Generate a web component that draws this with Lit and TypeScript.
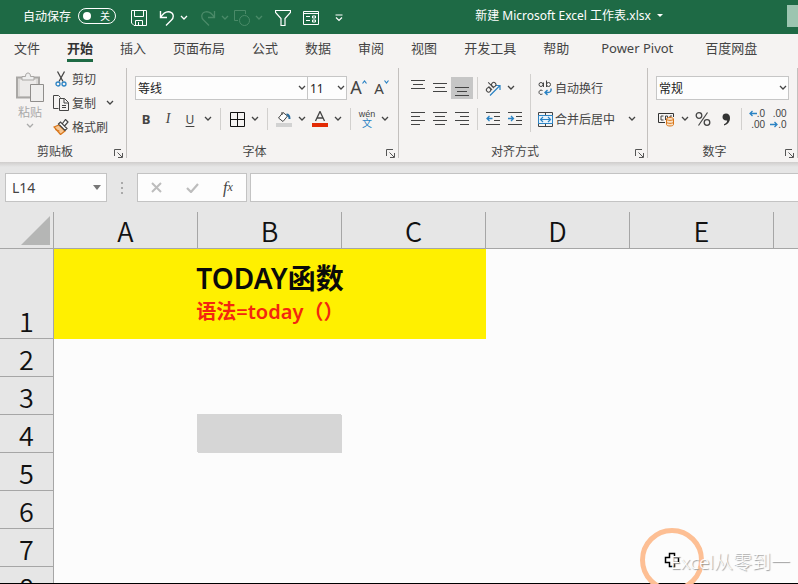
import { LitElement, html, css, svg, TemplateResult } from "lit";
import { customElement, property } from "lit/decorators.js";
import { classMap } from "lit/directives/class-map.js";

const icon = (w: number, h: number, body: TemplateResult) =>
  html`<svg width=${w} height=${h} viewBox="0 0 ${w} ${h}" fill="none" stroke="currentColor" aria-hidden="true">${body}</svg>`;

const chevron = icon(8, 6, svg`<path d="M1 1l3 3 3-3" stroke-width="1.3"/>`);

const icons = {
  save: icon(16, 16, svg`<path d="M.5.5h15v15H3L.5 13zM3.5.5v6h9v-6M4.5 15.5v-5h7v5M7.5 12v3.5"/>`),
  undo: icon(16, 16, svg`<path d="M1.5 1v6.500H8M1.500 7.500C4 3.500 7.500 1 11 2c4 1.200 4 5.500 1.500 8L7 15.500" stroke-width="1.4"/>`),
  redo: icon(16, 16, svg`<path d="M14.500 1v6.500H8M14.500 7.500C12 3.500 8.500 1 5 2c-4 1.200-4 5.500-1.500 8L9 15.500" stroke-width="1.3"/>`),
  shapes: icon(16, 16, svg`<path d="M4 10.500H.5V.5h11v3.500"/><circle cx="10.500" cy="10.500" r="5"/>`),
  funnel: icon(16, 16, svg`<path d="M.5.5h15v2L10 8.500v7H6v-7L.5 2.500z" stroke-width="1.2"/>`),
  form: icon(16, 14, svg`<path d="M.5.500h15v13H.5zM.5 2.500h15M3 5.500h4M3 9.500h4"/><path d="M9.500 5h3v2h-3zM9.500 9h3v2h-3z"/>`),
  customize: icon(8, 8, svg`<path d="M.5 1h7M1 3.500l3 3 3-3" stroke-width="1.2"/>`),
  paste: icon(30, 31, svg`<path d="M2 5.500h22v20H2z" fill="#dcdad8" stroke="#a9a7a5" stroke-width="2"/><path d="M5 8h16v16H5z" fill="#eceae9" stroke="none"/><path d="M7 8V4.500h3.500C10.500 2 11.500 1 13 1s2.500 1 2.500 3.500H19V8z" fill="#eee" stroke="#a9a7a5"/><path d="M15.500 12.500h13v17h-13z" fill="#efeeed" stroke="#8f8d8b"/>`),
  cut: icon(12, 16, svg`<path d="M2.500.5l5.500 10M9.500.5L4 10.500" stroke="#444" stroke-width="1.3"/><circle cx="3" cy="13" r="2" stroke="#2b83c4" stroke-width="1.3"/><circle cx="9" cy="13" r="2" stroke="#2b83c4" stroke-width="1.3"/>`),
  copy: icon(16, 16, svg`<path d="M5.500 13.500H.5V.5h5l2 2"/><path d="M6.500 3.500h5l4 4v8h-9zM11 3.500V8h4.500M9 10.500h4M9 12.500h4" fill="#f5f3f2"/>`),
  painter: icon(16, 16, svg`<path d="M1 8l5-2 6 6-4.500 3.500z" fill="#f6c795" stroke="#d9761a" stroke-width="1.3"/><path d="M2 10.500l4.500 1.500" stroke="#d9761a"/><path d="M5.500 5l2-2 6.500 6.500-2 2zM9.500 4.500l3-4 2.500 2.500-3.500 4" fill="#fff" stroke="#444" stroke-width="1.2"/>`),
  borders: icon(15, 15, svg`<path d="M.5.5h14v14H.5zM7.500.5v14M.5 7.500h14" stroke="#111"/>`),
  fill: icon(16, 16, svg`<path d="M0 12h16v4H0z" fill="#d2d2d2" stroke="none"/><path d="M7 1.500L2.500 7 7 10.500l4.500-5.500zM6 4V1" fill="#fff" stroke="#444"/><path d="M10.500 3.500c2 0 3 1.500 3 4.500" stroke="#2b6c9c" stroke-width="2"/>`),
  fontColor: icon(16, 16, svg`<path d="M0 12h16v4H0z" fill="#e32b05" stroke="none"/><path d="M3.500 10L8 .5 12.500 10M5 7h6" stroke="#444" stroke-width="1.3"/>`),
  up: icon(5, 4, svg`<path d="M.5 3.500l2-2.500 2 2.500" stroke="#2b83c4" stroke-width="1.2"/>`),
  down: icon(5, 4, svg`<path d="M.5.5l2 2.500 2-2.500" stroke="#2b83c4" stroke-width="1.2"/>`),
  orientation: icon(18, 17, svg`<path d="M6 15.500L16 5.500M11.500 5.500H16V10" stroke="#2b83c4" stroke-width="1.2"/><g transform="rotate(-45 6 7)"><circle cx="3" cy="8" r="2.2" stroke="#444"/><path d="M5.500 5.500v5M8 2.500v8" stroke="#444"/><circle cx="10.300" cy="8" r="2.2" stroke="#444"/></g>`),
  outdent: icon(14, 14, svg`<path d="M0 .5h14M8 4.500h6M8 8.500h6M0 12.500h14"/><path d="M6.500 6.500H1M3.500 4L1 6.500 3.500 9" stroke="#2b83c4" stroke-width="1.3"/>`),
  indent: icon(14, 14, svg`<path d="M0 .5h14M8 4.500h6M8 8.500h6M0 12.500h14"/><path d="M0 6.500h5.500M3 4l2.500 2.500L3 9" stroke="#2b83c4" stroke-width="1.3"/>`),
  wrap: icon(14, 16, svg`<circle cx="3" cy="4.500" r="2" stroke="#444"/><path d="M5.500 2.500v4.500M8.500.5V7" stroke="#444"/><circle cx="10.500" cy="4.500" r="2" stroke="#444"/><path d="M4.500 10.500c-2-1-3.500 0-3.500 1.800s1.500 2.700 3.500 1.700" stroke="#444"/><path d="M13 8.500c.5 3-1 4-3 4H7M9.500 10L7 12.500 9.500 15" stroke="#2b83c4" stroke-width="1.4"/>`),
  merge: icon(15, 15, svg`<path d="M.5.5h14v14H.5zM7.500.5v3M7.500 11.500v3" stroke="#444"/><path d="M.5 3.500h14v8H.5z" fill="#e9f3fb" stroke="#2b83c4"/><path d="M2.500 7.500h10M5 5L2.500 7.500 5 10M10 5l2.500 2.500L10 10" stroke="#2b83c4" stroke-width="1.2"/>`),
  currency: icon(17, 15, svg`<path d="M7 10.500H.5v-9h15V5" stroke="#333"/><path d="M5.500 4H3v4h2.500M9.500 7V4h-2v4M14 4h-2v2" stroke="#444"/><path d="M8.500 7c0-2 7-2 7 0v5.500c0 2-7 2-7 0z" fill="#fbe3c8" stroke="#d9761a"/><path d="M8.500 7c0 1.800 7 1.800 7 0M8.500 10c0 1.800 7 1.800 7 0" stroke="#d9761a"/>`),
  percent: icon(16, 16, svg`<circle cx="4" cy="4.500" r="2.800" stroke="#444" stroke-width="1.3"/><circle cx="12" cy="11.500" r="2.800" stroke="#444" stroke-width="1.3"/><path d="M12.500 1.500l-9 13" stroke="#444" stroke-width="1.2"/>`),
  comma: icon(8, 13, svg`<path d="M4 .5c2.500 0 4 1.500 4 4.500 0 4-2.500 6.500-6 7.500v-1.200c2-.8 3-2 3.200-3.800C2.500 8 .5 6.500.5 4S2 .5 4 .5z" fill="#333" stroke="none"/>`),
  arrowLeft: icon(8, 7, svg`<path d="M8 3.500H1M3.500 1L1 3.500 3.500 6" stroke="#2b83c4" stroke-width="1.3"/>`),
  arrowRight: icon(8, 7, svg`<path d="M0 3.500h7M4.500 1L7 3.500 4.500 6" stroke="#2b83c4" stroke-width="1.3"/>`),
  launcher: icon(9, 9, svg`<path d="M.5 7V.5H7M3.500 3.500l4.500 4.500M8.500 4v4.500H4" stroke="#555"/>`),
  dropdown: icon(8, 5, svg`<path d="M0 0h8L4 5z" fill="#777" stroke="none"/>`),
  cancel: icon(11, 11, svg`<path d="M1 1l9 9M10 1l-9 9" stroke="#bdbdbd" stroke-width="2"/>`),
  accept: icon(13, 10, svg`<path d="M1 5l4 4 7-8" stroke="#bdbdbd" stroke-width="2.2"/>`),
  corner: icon(29, 29, svg`<path d="M29 0v29H0z" fill="#b5b6b5" stroke="none"/>`),
};

const lines = (rows: number[][]) =>
  icon(14, 16, svg`${rows.map(([y, a, b]) => svg`<path d="M${a} ${y + 0.5}H${b}"/>`)}`);

const verticalAligns: [string, TemplateResult, boolean][] = [
  ["顶端对齐", lines([[0, 0, 14], [4, 2, 12], [8, 0, 14]]), false],
  ["垂直居中", lines([[3, 0, 14], [7, 2, 12], [11, 0, 14]]), false],
  ["底端对齐", lines([[7, 0, 14], [11, 2, 12], [15, 0, 14]]), true],
];
const horizontalAligns: [string, TemplateResult][] = [
  ["左对齐", lines([[1, 0, 14], [5, 0, 9], [9, 0, 14], [13, 0, 9]])],
  ["居中", lines([[1, 0, 14], [5, 2, 12], [9, 0, 14], [13, 2, 12]])],
  ["右对齐", lines([[1, 0, 14], [5, 5, 14], [9, 0, 14], [13, 5, 14]])],
];

const base = css`
  :host {
    box-sizing: border-box;
    font-family: "Noto Sans", "Noto Sans CJK SC", sans-serif;
    font-size: 12px;
    color: #444;
  }
  *, *::before, *::after { box-sizing: border-box; }
  svg { display: block; flex: none; }
  button, select, input { font: inherit; color: inherit; margin: 0; }
  button {
    display: flex;
    align-items: center;
    justify-content: center;
    padding: 0;
    border: 0;
    background: none;
    white-space: nowrap;
  }
`;

@customElement("title-bar")
class TitleBar extends LitElement {
  static styles = [base, css`
    :host {
      display: flex;
      align-items: center;
      height: 34px;
      padding: 0 0 2px 23px;
      background: #1e6a45;
      color: #fff;
    }
    .autosave { display: flex; align-items: center; gap: 7px; height: 32px; margin-right: 3px; }
    .track {
      position: relative;
      display: grid;
      align-items: center;
      width: 38px;
      height: 16px;
      border: 1px solid #fff;
      border-radius: 8px;
    }
    .track input { appearance: none; width: 8px; height: 8px; margin: 0 0 0 4px; border-radius: 4px; background: #fff; grid-area: 1 / 1; }
    .track span { grid-area: 1 / 1; justify-self: end; padding-right: 5px; font-size: 10px; line-height: 14px; }
    .tools { display: flex; align-items: center; gap: 12px; padding: 3px 0 0 12px; }
    .split { display: flex; align-items: center; gap: 5px; }
    .faded { color: #4a8a68; }
    .narrow { width: 16px; }
    .title { flex: 1; height: 30px; padding: 0 0 2px 4px; }
    .title button { gap: 6px; width: 100%; height: 100%; }
    .caret { width: 0; height: 0; border: 3px solid transparent; border-top-color: #fff; border-bottom: 0; }
    .account { width: 11px; height: 22px; background: #9cc5b0; }
  `];
  render() {
    return html`
      <label class="autosave">自动保存
        <span class="track"><input type="checkbox" role="switch" /><span>关</span></span>
      </label>
      <div class="tools">
        <button aria-label="保存">${icons.save}</button>
        <div class="split"><button aria-label="撤消">${icons.undo}</button><button aria-label="撤消列表">${chevron}</button></div>
        <div class="split faded">
          <button aria-label="恢复">${icons.redo}</button><button aria-label="恢复列表">${chevron}</button>
          <button aria-label="形状">${icons.shapes}</button><button aria-label="形状列表">${chevron}</button>
        </div>
        <button aria-label="筛选">${icons.funnel}</button>
        <button aria-label="窗体">${icons.form}</button>
        <button class="narrow" aria-label="自定义快速访问工具栏">${icons.customize}</button>
      </div>
      <div class="title"><button>新建 Microsoft Excel 工作表.xlsx<i class="caret"></i></button></div>
      <div class="account"></div>`;
  }
}

@customElement("ribbon-tabs")
class RibbonTabs extends LitElement {
  static styles = [base, css`
    :host { display: block; background: #f5f3f2; }
    nav { display: flex; gap: 27px; height: 30px; padding-left: 14px; overflow: hidden; }
    a {
      height: 28px;
      border-bottom: 3px solid transparent;
      font-size: 13px;
      line-height: 28px;
      color: #444;
      text-decoration: none;
      white-space: nowrap;
    }
    .active { font-weight: 700; color: #333; border-color: #1e6a45; }
    .addin { padding: 0 5px; }
  `];
  tabs = ["文件", "开始", "插入", "页面布局", "公式", "数据", "审阅", "视图", "开发工具", "帮助", "Power Pivot", "百度网盘"];
  render() {
    return html`<nav>${this.tabs.map((t) => html`<a href="#" class=${classMap({ active: t === "开始", addin: t === "Power Pivot" })}>${t}</a>`)}</nav>`;
  }
}

@customElement("ribbon-group")
class RibbonGroup extends LitElement {
  @property() label = "";
  static styles = [base, css`
    :host {
      display: flex;
      flex-direction: column;
      justify-content: space-between;
      height: 90px;
      border-right: 1px solid #c3c0be;
    }
    footer { display: flex; align-items: center; height: 12px; line-height: 12px; }
    footer span { flex: 1; text-align: center; }
    button { width: 16px; height: 12px; padding-top: 3px; }
  `];
  render() {
    return html`<slot></slot>
      <footer><span>${this.label}</span><button aria-label="${this.label}设置">${icons.launcher}</button></footer>`;
  }
}

@customElement("ribbon-panel")
class RibbonPanel extends LitElement {
  static styles = [base, css`
    :host {
      display: flex;
      padding: 4px 0;
      background: #f5f3f2;
      overflow: hidden;
    }
    ribbon-group { flex: none; }
    .clipboard { display: flex; gap: 8px; padding: 3px 0 0 15px; width: 126px; }
    .paste { flex-direction: column; justify-content: flex-start; gap: 2px; width: 30px; padding-top: 1px; line-height: 16px; color: #aaa; }
    .stack button { gap: 3px; height: 24px; justify-content: flex-start; }
    .stack i, .labelled i { display: flex; justify-content: center; width: 16px; }
    .line { display: flex; }
    .line .arrow { width: 14px; margin-left: 10px; }
    .stack, .rows { display: flex; flex-direction: column; }
    .stack { margin-top: -4px; }
    .rows { gap: 7px; padding: 8px 8px 0; }
    .row { display: flex; align-items: center; height: 24px; }
    .row button { width: 22px; height: 22px; }
    .row .arrow { width: 14px; }
    .row .labelled { width: auto; }
    .labelled i { width: 20px; }
    .pressed { background: #c6c6c6; }
    .sep { width: 1px; height: 22px; margin: 0 4px; background: #d2d0ce; }
    .tall { height: 58px; margin: 6px 0 0; }
    .font { padding-right: 5px; }
    .font .sep { margin: 0 5px; }
    .pick { display: grid; align-items: center; }
    .pick select {
      grid-area: 1 / 1;
      appearance: none;
      width: 100%;
      height: 24px;
      padding: 0 2px;
      border: 1px solid #c6c6c6;
      border-radius: 0;
      background: #fdfdfd;
      color: #222;
    }
    .pick svg { grid-area: 1 / 1; justify-self: end; margin-right: 2px; pointer-events: none; }
    .family { width: 173px; }
    .size { width: 40px; margin-left: -1px; }
    .format { width: 134px; }
    .row .grow { width: 23px; align-items: flex-start; font-size: 18px; line-height: 20px; }
    .row .shrink { font-size: 15px; line-height: 22px; }
    .grow svg { margin-top: 3px; }
    .bold { font-weight: 700; font-size: 13px; }
    .italic { font-family: "Liberation Serif", serif; font-style: italic; font-size: 14px; }
    .underline { text-decoration: underline; text-underline-offset: 2px; }
    .row .phonetic { flex-direction: column; font-family: "Liberation Sans", "Noto Sans CJK SC", sans-serif; font-size: 9px; line-height: 10px; }
    .phonetic b { font-weight: 400; font-size: 10px; line-height: 10px; color: #2b83c4; }
    .align { display: flex; }
    .align .rows:first-child { padding-right: 4px; }
    .align .rows:last-child { padding-left: 4px; width: 116px; }
    .row .wide { width: 24px; }
    .row .decimals { flex-direction: column; font-family: "Liberation Sans", sans-serif; font-size: 10px; line-height: 11px; }
    .decimals span { display: flex; align-items: center; justify-content: flex-end; width: 17px; }
    .number { width: 149px; }
    .end { margin-left: auto; }
  `];
  render() {
    const arrow = (name: string) => html`<button class="arrow" aria-label=${name}>${chevron}</button>`;
    return html`
      <ribbon-group label="剪贴板">
        <div class="clipboard">
          <button class="paste">${icons.paste}<span>粘贴</span>${chevron}</button>
          <div class="stack">
            <button><i>${icons.cut}</i>剪切</button>
            <div class="line"><button><i>${icons.copy}</i>复制</button>${arrow("复制选项")}</div>
            <button><i>${icons.painter}</i>格式刷</button>
          </div>
        </div>
      </ribbon-group>
      <ribbon-group label="字体">
        <div class="rows font">
          <div class="row">
            <label class="pick family"><select aria-label="字体"><option>等线</option></select>${chevron}</label>
            <label class="pick size"><select aria-label="字号"><option>11</option></select>${chevron}</label>
            <button class="grow" aria-label="增大字号">A${icons.up}</button>
            <button class="grow shrink" aria-label="减小字号">A${icons.down}</button>
          </div>
          <div class="row">
            <button class="bold">B</button><button class="italic">I</button><button class="underline">U</button>${arrow("下划线")}
            <i class="sep"></i>
            <button aria-label="边框">${icons.borders}</button>${arrow("边框选项")}
            <i class="sep"></i>
            <button aria-label="填充颜色">${icons.fill}</button>${arrow("填充选项")}
            <button aria-label="字体颜色">${icons.fontColor}</button>${arrow("颜色选项")}
            <i class="sep"></i>
            <button class="phonetic">wén<b>文</b></button>${arrow("拼音选项")}
          </div>
        </div>
      </ribbon-group>
      <ribbon-group label="对齐方式">
        <div class="align">
          <div class="rows">
            <div class="row">
              ${verticalAligns.map(([n, g, on]) => html`<button class=${classMap({ pressed: on })} aria-label=${n}>${g}</button>`)}
              <i class="sep"></i>
              <button aria-label="方向">${icons.orientation}</button>${arrow("方向选项")}
            </div>
            <div class="row">
              ${horizontalAligns.map(([n, g]) => html`<button aria-label=${n}>${g}</button>`)}
              <i class="sep"></i>
              <button aria-label="减少缩进量">${icons.outdent}</button>
              <button aria-label="增加缩进量">${icons.indent}</button>
            </div>
          </div>
          <i class="sep tall"></i>
          <div class="rows">
            <div class="row"><button class="labelled"><i>${icons.wrap}</i>自动换行</button></div>
            <div class="row"><button class="labelled"><i>${icons.merge}</i>合并后居中</button><span class="end"></span>${arrow("合并选项")}</div>
          </div>
        </div>
      </ribbon-group>
      <ribbon-group label="数字">
        <div class="rows number">
          <div class="row">
            <label class="pick format"><select aria-label="数字格式"><option>常规</option></select>${chevron}</label>
          </div>
          <div class="row">
            <button aria-label="会计数字格式">${icons.currency}</button>${arrow("货币选项")}
            <button class="wide" aria-label="百分比样式">${icons.percent}</button>
            <button aria-label="千位分隔样式">${icons.comma}</button>
            <i class="sep"></i>
            <button class="decimals"><span>${icons.arrowLeft}.0</span><span>.00</span></button>
            <button class="decimals"><span>.00</span><span>${icons.arrowRight}.0</span></button>
          </div>
        </div>
      </ribbon-group>`;
  }
}

@customElement("formula-bar")
class FormulaBar extends LitElement {
  static styles = [base, css`
    :host {
      display: flex;
      height: 50px;
      padding: 11px 0 9px 5px;
      background: linear-gradient(#cfcdcc, #e6e6e6 5px);
    }
    .box { display: flex; align-items: center; height: 29px; border: 1px solid #c3c3c3; background: #fdfdfd; }
    .name { width: 102px; padding-right: 5px; }
    .name input { flex: 1; min-width: 0; padding: 0 6px; border: 0; background: none; font-size: 14px; outline: 0; }
    .dots { display: flex; flex-direction: column; justify-content: center; gap: 3px; width: 30px; height: 29px; align-items: center; }
    .dots i { width: 2px; height: 2px; background: #aaa; }
    .actions { width: 110px; }
    .actions button { flex: 1; height: 27px; }
    .fx { font-family: "Liberation Serif", serif; font-style: italic; font-size: 16px; }
    .fx small { font-size: 12px; }
    .formula { flex: 1; min-width: 0; margin-left: 3px; border-right: 0; padding: 0 6px; outline: 0; border-radius: 0; }
  `];
  render() {
    return html`
      <div class="box name"><input aria-label="名称框" value="L14" /><button aria-label="名称列表">${icons.dropdown}</button></div>
      <div class="dots"><i></i><i></i><i></i></div>
      <div class="box actions">
        <button aria-label="取消">${icons.cancel}</button>
        <button aria-label="输入">${icons.accept}</button>
        <button class="fx" aria-label="插入函数">f<small>x</small></button>
      </div>
      <input class="box formula" aria-label="编辑栏" />`;
  }
}

@customElement("sheet-grid")
class SheetGrid extends LitElement {
  static styles = [base, css`
    :host { display: block; background: #fcfcfc; overflow: hidden; }
    table { width: 100%; table-layout: fixed; border-collapse: separate; border-spacing: 0; }
    .gutter { width: 54px; }
    .column { width: 144px; }
    th {
      padding: 0;
      background: #e6e6e6;
      color: #111;
      font-family: "Noto Sans CJK SC", sans-serif;
      font-weight: 350;
      font-size: 27px;
      line-height: 32px;
      border-right: 1px solid #a6a6a6;
      border-bottom: 1px solid #a6a6a6;
    }
    thead th { height: 37px; padding-top: 2px; }
    thead th:last-child { border-right: 0; }
    thead .all { padding: 0 3px 3px 0; vertical-align: bottom; }
    .all svg { margin-left: auto; }
    tbody th { height: 38px; padding-bottom: 1px; vertical-align: bottom; }
    tbody .first { height: 90px; }
    td { padding: 0; }
    .banner { background: #fff000; text-align: center; }
    .note { display: inline-block; text-align: left; font-weight: 600; color: #f3260f; font-size: 20px; line-height: 32px; }
    .note strong { display: block; font-weight: 600; color: #0a0a0a; font-size: 28px; line-height: 36px; }
    .shaded { background: #d6d6d6; box-shadow: -1px -1px 0 #d6d6d6; }
  `];
  columns = ["A", "B", "C", "D", "E"];
  rows = [2, 3, 4, 5, 6, 7, 8];
  render() {
    return html`
      <table>
        <colgroup><col class="gutter" />${this.columns.map(() => html`<col class="column" />`)}<col /></colgroup>
        <thead>
          <tr><th class="all">${icons.corner}</th>${this.columns.map((c) => html`<th scope="col">${c}</th>`)}<th></th></tr>
        </thead>
        <tbody>
          <tr>
            <th class="first" scope="row">1</th>
            <td class="banner" colspan="3"><div class="note"><strong>TODAY函数</strong>语法=today（）</div></td>
            <td></td><td></td><td></td>
          </tr>
          ${this.rows.map((r) => html`<tr>
            <th scope="row">${r}</th>
            ${[...this.columns, ""].map((c) => html`<td class=${classMap({ shaded: r === 4 && c === "B" })}></td>`)}
          </tr>`)}
        </tbody>
      </table>`;
  }
}

@customElement("app-root")
class AppRoot extends LitElement {
  static styles = [base, css`
    :host { position: relative; display: flex; flex-direction: column; height: 100vh; overflow: hidden; background: #fcfcfc; }
    sheet-grid { flex: 1; min-height: 0; border-bottom: 1px solid #000; }
    .pointer { position: absolute; right: 94px; bottom: -8px; }
    .watermark {
      position: absolute;
      right: 8px;
      bottom: 10px;
      font-size: 19px;
      font-weight: 300;
      line-height: 24px;
      color: #fff;
      text-shadow: 1px 1px 1px #999;
    }
  `];
  render() {
    return html`
      <title-bar></title-bar>
      <ribbon-tabs></ribbon-tabs>
      <ribbon-panel></ribbon-panel>
      <formula-bar></formula-bar>
      <sheet-grid></sheet-grid>
      <div class="pointer">
        ${icon(64, 64, svg`<circle cx="32" cy="32" r="29.500" stroke="#fdbf94" stroke-width="5"/><path d="M29.500 25.500h5v4h4v5h-4v4h-5v-4h-4v-5h4z" fill="#fff" stroke="#000" stroke-width="1.500"/>`)}
      </div>
      <div class="watermark">Excel从零到一</div>`;
  }
}
